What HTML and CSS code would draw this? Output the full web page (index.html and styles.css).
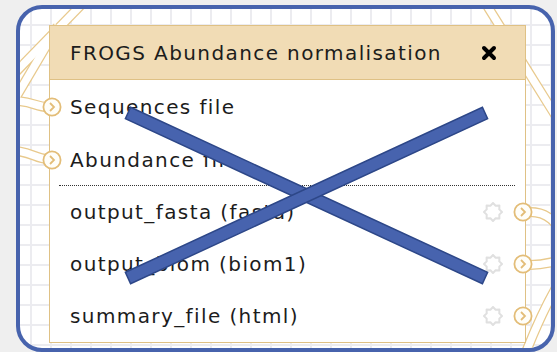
FILE: index.html
```html
<!DOCTYPE html>
<html lang="en">
<head>
    <meta charset="UTF-8">
    <title>FROGS Abundance normalisation</title>
    <link rel="stylesheet" href="styles.css">
</head>
<body>
    <div class="editor">
        <!-- connections drawn on the canvas behind the node -->
        <svg class="noodles" width="531" height="339" viewBox="20 9 531 339">
            <g class="pipe-edge">
                <path d="M 10 78 L 82 4"/>
                <path d="M 12 104 L 58 26"/>
                <path d="M 15 101 C 32 101, 36 107, 48 107"/>
                <path d="M 15 151 C 32 152, 36 159, 48 159"/>
                <path d="M 486 4 L 562 126"/>
                <path d="M 530 212 C 548 212, 556 222, 566 240"/>
                <path d="M 530 265 C 545 265, 555 262, 566 258"/>
                <path d="M 526 352 C 538 322, 552 292, 566 272"/>
                <path d="M 544 354 L 566 318"/>
            </g>
            <g class="pipe-fill">
                <path d="M 10 78 L 82 4"/>
                <path d="M 12 104 L 58 26"/>
                <path d="M 15 101 C 32 101, 36 107, 48 107"/>
                <path d="M 15 151 C 32 152, 36 159, 48 159"/>
                <path d="M 486 4 L 562 126"/>
                <path d="M 530 212 C 548 212, 556 222, 566 240"/>
                <path d="M 530 265 C 545 265, 555 262, 566 258"/>
                <path d="M 526 352 C 538 322, 552 292, 566 272"/>
                <path d="M 544 354 L 566 318"/>
            </g>
        </svg>

        <div class="node">
            <div class="node-title">
                <span>FROGS Abundance normalisation</span>
                <svg class="close" width="16" height="16" viewBox="0 0 16 16">
                    <path d="M 3 3 L 13 13 M 13 3 L 3 13"/>
                </svg>
            </div>
            <div class="node-body">
                <div class="row input">
                    <svg class="port" width="20" height="20" viewBox="0 0 20 20">
                        <circle cx="10" cy="10" r="8.6"/>
                        <polyline points="8,6 12,10 8,14"/>
                    </svg>
                    Sequences file
                </div>
                <div class="row input">
                    <svg class="port" width="20" height="20" viewBox="0 0 20 20">
                        <circle cx="10" cy="10" r="8.6"/>
                        <polyline points="8,6 12,10 8,14"/>
                    </svg>
                    Abundance file
                </div>
                <div class="rule"></div>
                <div class="row output">
                    output_fasta (fasta)
                    <svg class="gear" width="20" height="20" viewBox="0 0 20 20">
                        <polygon points="19,10 16.3,12.6 16.4,16.4 12.6,16.3 10,19 7.4,16.3 3.6,16.4 3.7,12.6 1,10 3.7,7.4 3.6,3.6 7.4,3.7 10,1 12.6,3.7 16.4,3.6 16.3,7.4"/>
                    </svg>
                    <svg class="port" width="20" height="20" viewBox="0 0 20 20">
                        <circle cx="10" cy="10" r="8.6"/>
                        <polyline points="8,6 12,10 8,14"/>
                    </svg>
                </div>
                <div class="row output">
                    output_biom (biom1)
                    <svg class="gear" width="20" height="20" viewBox="0 0 20 20">
                        <polygon points="19,10 16.3,12.6 16.4,16.4 12.6,16.3 10,19 7.4,16.3 3.6,16.4 3.7,12.6 1,10 3.7,7.4 3.6,3.6 7.4,3.7 10,1 12.6,3.7 16.4,3.6 16.3,7.4"/>
                    </svg>
                    <svg class="port" width="20" height="20" viewBox="0 0 20 20">
                        <circle cx="10" cy="10" r="8.6"/>
                        <polyline points="8,6 12,10 8,14"/>
                    </svg>
                </div>
                <div class="row output">
                    summary_file (html)
                    <svg class="gear" width="20" height="20" viewBox="0 0 20 20">
                        <polygon points="19,10 16.3,12.6 16.4,16.4 12.6,16.3 10,19 7.4,16.3 3.6,16.4 3.7,12.6 1,10 3.7,7.4 3.6,3.6 7.4,3.7 10,1 12.6,3.7 16.4,3.6 16.3,7.4"/>
                    </svg>
                    <svg class="port" width="20" height="20" viewBox="0 0 20 20">
                        <circle cx="10" cy="10" r="8.6"/>
                        <polyline points="8,6 12,10 8,14"/>
                    </svg>
                </div>
            </div>
        </div>

        <!-- the big cross laid over the node -->
        <svg class="cross" width="531" height="339" viewBox="20 9 531 339">
            <polygon points="130.6,107.3 487.6,272.3 482.4,283.7 125.4,118.7"/>
            <polygon points="125.4,272.3 482.4,107.3 487.6,118.7 130.6,283.7"/>
        </svg>
    </div>
</body>
</html>
```

FILE: styles.css
```css
html, body {
    margin: 0;
    height: 352px;
    overflow: hidden;
}
body {
    background-color: #efefef;
    font-family: "DejaVu Sans", Verdana, sans-serif;
}
.editor {
    position: relative;
    box-sizing: border-box;
    width: 539px;
    height: 347px;
    margin: 5px 0 0 16px;
    padding: 16px 0 0 29px;
    border: 4px solid #4763ad;
    border-radius: 26px;
    overflow: hidden;
    background-color: #fff;
    background-image:
        linear-gradient(#ececf0 2px, transparent 2px),
        linear-gradient(90deg, #ececf0 2px, transparent 2px);
    background-size: 20px 20px;
    background-position: 10px 15px;
}
.noodles {
    position: absolute;
    top: 0;
    left: 0;
}
.noodles path {
    fill: none;
}
.pipe-edge path {
    stroke: #e8c98c;
    stroke-width: 10;
}
.pipe-fill path {
    stroke: #fff;
    stroke-width: 7.5;
}
.node {
    position: relative;
    box-sizing: border-box;
    width: 477px;
    background-color: #fff;
    border: 1px solid #dfc185;
    color: #1c1c1c;
    font-size: 20px;
    letter-spacing: 1.4px;
}
.node-title {
    display: flex;
    align-items: center;
    justify-content: space-between;
    height: 53px;
    padding: 0 28px 0 20px;
    background-color: #f1dcb5;
    border-bottom: 1px solid #dfc185;
}
.close path {
    stroke: #000;
    stroke-width: 4;
    stroke-linecap: round;
    fill: none;
}
.row {
    position: relative;
    display: flex;
    align-items: center;
    padding-left: 20px;
}
.input {
    height: 53px;
}
.output {
    height: 52px;
}
.rule {
    margin: -1px 10px 0 9px;
    border-top: 1px dotted #333;
}
.port {
    position: absolute;
    top: 50%;
    margin-top: -10px;
}
.port circle {
    fill: #fffef9;
    stroke: #e3bd78;
    stroke-width: 1.8;
}
.port polyline {
    fill: none;
    stroke: #e3bd78;
    stroke-width: 1.8;
}
.input .port {
    left: -8px;
}
.output .port {
    right: -8px;
}
.gear {
    position: absolute;
    right: 22px;
    top: 50%;
    margin-top: -10px;
}
.gear polygon {
    fill: none;
    stroke: #e0e0e0;
    stroke-width: 2;
    stroke-linejoin: round;
}
.cross {
    position: absolute;
    top: 0;
    left: 0;
}
.cross polygon {
    fill: #4763ae;
    stroke: #2d4788;
    stroke-width: 1.5;
}
```
